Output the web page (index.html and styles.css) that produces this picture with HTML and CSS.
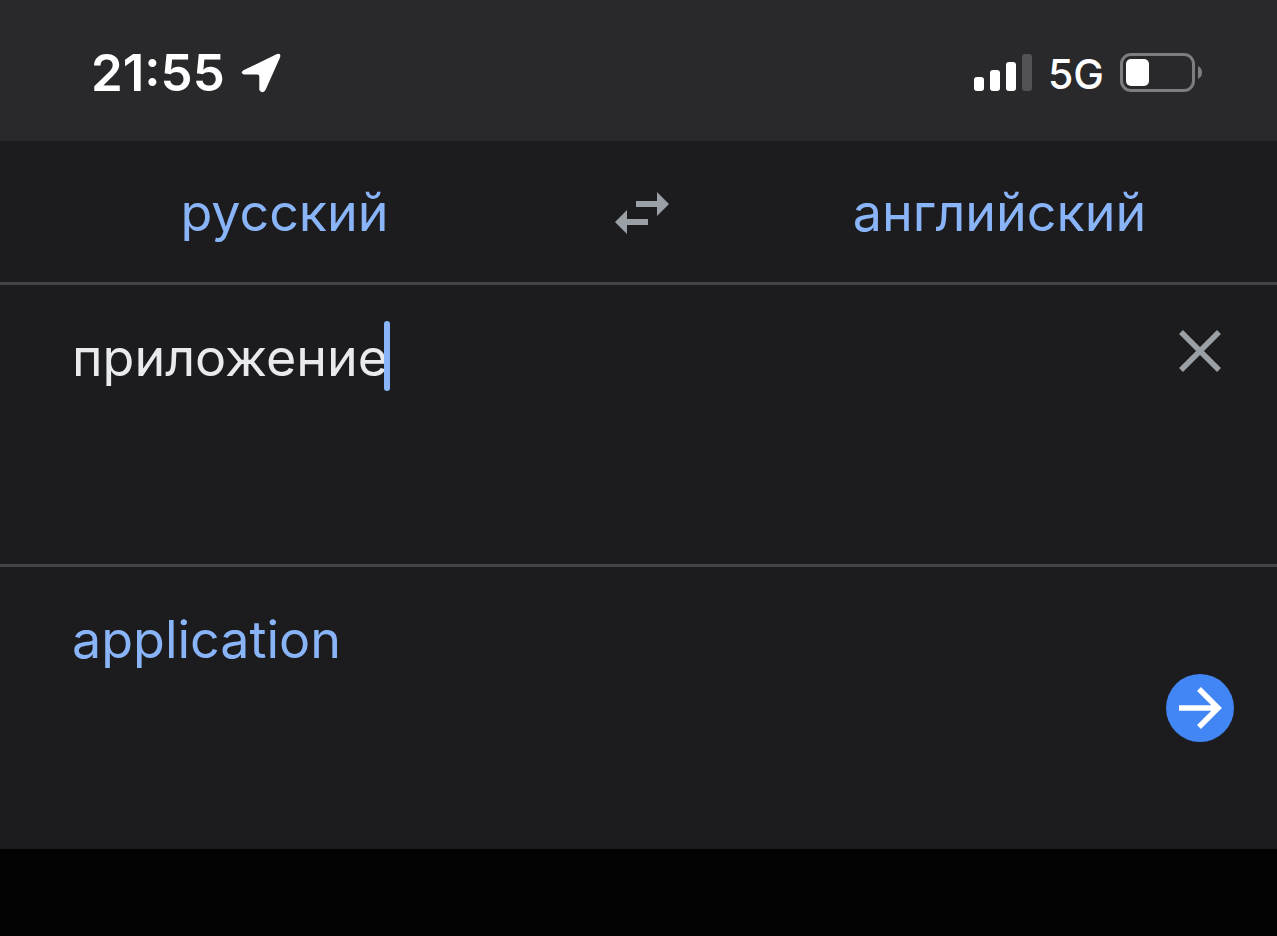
FILE: index.html
```html
<!DOCTYPE html>
<html lang="ru">
<head>
    <meta charset="UTF-8">
    <meta name="viewport" content="width=device-width, initial-scale=1.0">
    <title>Переводчик</title>
    <link rel="stylesheet" href="styles.css">
</head>
<body>
    <header class="status-bar">
        <div class="status-left">
            <time class="clock">21:55</time>
            <svg width="40" height="40" viewBox="0 0 40 40" aria-hidden="true">
                <path d="M2.5 17.2L35.5 1.3Q40.500-.5 39 4.500L24.500 37Q21.500 41.500 18.300 37V23.500Q18.300 21.500 16.300 21.500H3Q-1.500 20 2.500 17.200Z" fill="#fff"/>
            </svg>
        </div>
        <div class="status-right">
            <svg width="58" height="40" viewBox="0 0 58 40" aria-hidden="true">
                <rect x="0" y="24" width="10" height="14" rx="3" fill="#fff"/>
                <rect x="16" y="17" width="10" height="21" rx="3" fill="#fff"/>
                <rect x="32" y="9" width="10" height="29" rx="3" fill="#fff"/>
                <rect x="48" y="1" width="10" height="37" rx="3" fill="#535355"/>
            </svg>
            <span class="network">5G</span>
            <svg width="82" height="40" viewBox="0 0 82 40" aria-hidden="true">
                <rect x="1.5" y="1.5" width="72" height="36" rx="9.5" fill="none" stroke="#7d7d7f" stroke-width="3"/>
                <rect x="6" y="6" width="23" height="27" rx="5" fill="#fff"/>
                <path d="M78 13Q82 15 82 19.5T78 26Z" fill="#7d7d7f"/>
            </svg>
        </div>
    </header>

    <main class="translator">
        <nav class="languages">
            <button class="language" type="button">русский</button>
            <button class="icon-btn" type="button" aria-label="Поменять языки">
                <svg width="54" height="42" viewBox="0 0 54 42" aria-hidden="true">
                    <path d="M21 9H42V0L54 12L42 24V15H21ZM33 27H12V18L0 30L12 42V33H33Z" fill="#9aa0a6"/>
                </svg>
            </button>
            <button class="language" type="button">английский</button>
        </nav>

        <section class="panel source">
            <div class="field">
                <input class="source-text" type="text" value="приложение" aria-label="Исходный текст">
                <span class="caret"></span>
            </div>
            <button class="icon-btn clear" type="button" aria-label="Очистить">
                <svg width="42" height="42" viewBox="0 0 42 42" aria-hidden="true">
                    <path d="M2 2L40 40M40 2L2 40" stroke="#9aa0a6" stroke-width="5.5"/>
                </svg>
            </button>
        </section>

        <section class="panel result">
            <output class="result-text" lang="en">application</output>
            <button class="icon-btn go" type="button" aria-label="Открыть перевод">
                <svg width="68" height="68" viewBox="0 0 68 68" aria-hidden="true">
                    <circle cx="34" cy="34" r="34" fill="#4285f4"/>
                    <path d="M13 34H52M33 15L52 34L33 53" fill="none" stroke="#fff" stroke-width="5.5"/>
                </svg>
            </button>
        </section>
    </main>
</body>
</html>
```

FILE: styles.css
```css
* {
    margin: 0;
    padding: 0;
    box-sizing: border-box;
}

body {
    font-family: Inter, Roboto, sans-serif;
    background-color: #030303;
    color: #e8eaed;
}

button {
    border: none;
    background: none;
    font: inherit;
    cursor: pointer;
}

svg {
    display: block;
}

.status-bar {
    display: flex;
    justify-content: space-between;
    align-items: center;
    padding: 41px 75px 36px 91px;
    background-color: #29292b;
    color: #fff;
}

.status-left,
.status-right {
    display: flex;
    align-items: center;
    gap: 16px;
}

.clock {
    font-size: 51px;
    line-height: 64px;
    font-weight: 600;
}

.network {
    padding-top: 2px;
    font-size: 41px;
    line-height: 62px;
    font-weight: 500;
}

.translator {
    background-color: #1c1c1e;
}

.languages {
    display: grid;
    grid-template-columns: 1fr 160px 1fr;
    align-items: center;
    padding: 37px 0 34px 7px;
    border-bottom: 3px solid #444447;
}

.language {
    font-size: 52px;
    line-height: 70px;
    color: #8ab4f8;
}

.icon-btn {
    display: flex;
    justify-content: center;
    align-items: center;
}

.panel {
    display: flex;
    justify-content: space-between;
    align-items: flex-start;
    min-height: 282px;
    padding: 36px 43px 36px 72px;
}

.source {
    border-bottom: 3px solid #444447;
}

.field {
    display: flex;
    min-width: 0;
}

.source-text {
    field-sizing: content;
    border: none;
    outline: none;
    background: none;
    color: #e8eaed;
    font-family: inherit;
    font-size: 52px;
    line-height: 74px;
    height: 74px;
}

.caret {
    flex: none;
    width: 6px;
    height: 70px;
    margin-left: -4px;
    border-radius: 3px;
    background-color: #8ab4f8;
}

.clear {
    width: 68px;
    height: 60px;
}

.result-text {
    font-size: 52px;
    line-height: 74px;
    color: #8ab4f8;
}

.go {
    align-self: center;
}
```
